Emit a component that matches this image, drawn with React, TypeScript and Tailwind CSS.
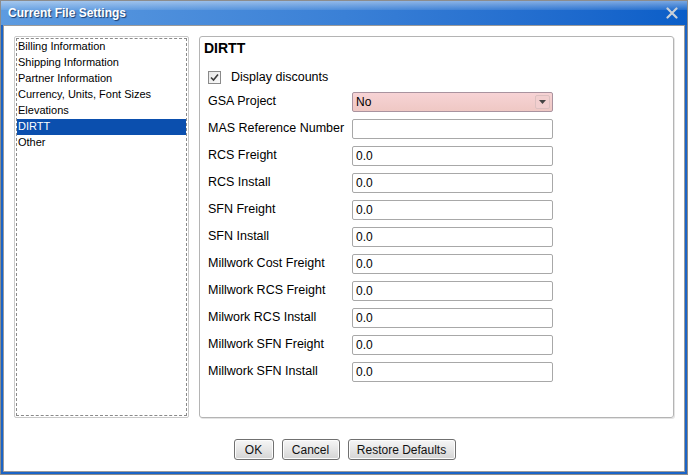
import React from "react";

const rows: { label: string; value: string }[] = [
  { label: "MAS Reference Number", value: "" },
  { label: "RCS Freight", value: "0.0" },
  { label: "RCS Install", value: "0.0" },
  { label: "SFN Freight", value: "0.0" },
  { label: "SFN Install", value: "0.0" },
  { label: "Millwork Cost Freight", value: "0.0" },
  { label: "Millwork RCS Freight", value: "0.0" },
  { label: "Milwork RCS Install", value: "0.0" },
  { label: "Millwork SFN Freight", value: "0.0" },
  { label: "Millwork SFN Install", value: "0.0" },
];

const sections = [
  "Billing Information",
  "Shipping Information",
  "Partner Information",
  "Currency, Units, Font Sizes",
  "Elevations",
  "DIRTT",
  "Other",
];

function Btn({ label, w }: { label: string; w: string }) {
  return (
    <button
      className={`${w} h-[21px] rounded-[3px] border border-[#707070] bg-gradient-to-b from-[#f6f6f6] via-[#e6e6e6] to-[#d4d4d4] text-[12px] text-[#111] shadow-[inset_0_0_0_1px_#fcfcfc]`}
    >
      {label}
    </button>
  );
}

export default function App() {
  return (
    <div
      className="w-[688px] h-[475px] border border-[#8c8c8c] bg-[#1b64c6] flex flex-col"
      style={{ fontFamily: '"Liberation Sans", Arial, sans-serif' }}
    >
      {/* Title bar */}
      <div className="relative h-[24px] flex items-center px-[7px] bg-gradient-to-r from-[#5d9be0] via-[#3a80d6] to-[#0a5ec8]">
        <div className="absolute inset-x-0 top-0 h-[9px] bg-gradient-to-b from-white/45 to-white/10" />
        <span className="relative text-white font-bold text-[12px] [text-shadow:1px_1px_1px_#1a3a6a]">
          Current File Settings
        </span>
        <svg className="absolute right-[9px] top-[6px]" width="12" height="12" viewBox="0 0 12 12">
          <path d="M1.5 1.5 L10.5 10.5 M10.5 1.5 L1.5 10.5" stroke="#c9d0d8" strokeWidth="2.2" strokeLinecap="round" />
        </svg>
      </div>

      {/* Body */}
      <div className="flex-1 mx-[2px] mb-[2px] bg-white border border-[#9a9a9a] flex flex-col px-[10px] pt-[10px]">
        <div className="flex gap-[10px] h-[382px]">
          {/* Section list */}
          <div className="w-[175px] rounded-[2px] border border-[#c8c8c8] p-px">
            <div className="h-full border border-dashed border-[#8a8a8a] text-[11px] text-black">
              {sections.map((s) => (
                <div
                  key={s}
                  className={`h-[16px] leading-[15px] px-px ${s === "DIRTT" ? "bg-[#0b4fae] text-white" : ""}`}
                >
                  {s}
                </div>
              ))}
            </div>
          </div>

          {/* Details panel */}
          <div className="w-[475px] rounded-[3px] border border-[#b4b4b4] shadow-[1px_1px_0_#e4e4e4] pl-[4px] pt-[1px]">
            <div className="font-bold text-[14px] text-black h-[20px] leading-[20px]">DIRTT</div>
            <div className="flex items-center h-[20px] mt-[9px] pl-[4px]">
              <div className="w-[13px] h-[13px] border border-[#8a8a8a] bg-gradient-to-br from-[#e6e6e6] to-[#fafafa] flex items-center justify-center">
                <svg width="9" height="9" viewBox="0 0 9 9">
                  <path d="M1 4.5 L3.5 7 L8 1.5" stroke="#3a3a3a" strokeWidth="1.6" fill="none" />
                </svg>
              </div>
              <span className="ml-[10px] text-[12.5px] text-black">Display discounts</span>
            </div>

            <div className="flex items-center h-[27px] mt-px pl-[4px]">
              <span className="w-[144px] text-[12.5px] text-black">GSA Project</span>
              <div className="relative w-[201px] h-[20px] rounded-[2px] border border-[#a9939f] bg-gradient-to-b from-[#f7d3d5] to-[#efc8c4] flex items-center pl-[3px] text-[12px] text-black">
                No
                <div className="absolute right-[2px] top-[2px] w-[15px] h-[14px] rounded-[2px] border border-[#dcc0c0] bg-[#f2cfcf] flex items-center justify-center">
                  <svg width="7" height="4" viewBox="0 0 7 4">
                    <path d="M0 0 L7 0 L3.5 4 Z" fill="#444" />
                  </svg>
                </div>
              </div>
            </div>

            {rows.map((r) => (
              <div key={r.label} className="flex items-center h-[27px] pl-[4px]">
                <span className="w-[144px] text-[12.5px] text-black">{r.label}</span>
                <div className="w-[201px] h-[20px] rounded-[2px] border border-[#a8a8a8] bg-white flex items-center pl-[3px] text-[12px] text-black">
                  {r.value}
                </div>
              </div>
            ))}
          </div>
        </div>

        {/* Buttons */}
        <div className="flex justify-center gap-[8px] mt-[21px] pl-[1px]">
          <Btn label="OK" w="w-[40px]" />
          <Btn label="Cancel" w="w-[58px]" />
          <Btn label="Restore Defaults" w="w-[108px]" />
        </div>
      </div>
    </div>
  );
}
